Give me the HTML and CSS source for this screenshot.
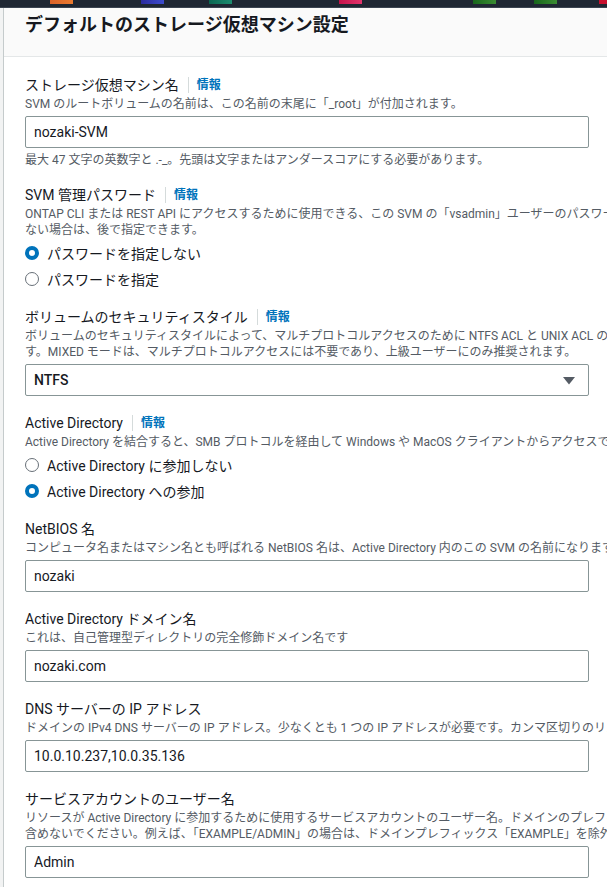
FILE: index.html
```html
<!DOCTYPE html>
<html lang="ja">
<head>
<meta charset="utf-8">
<title>デフォルトのストレージ仮想マシン設定</title>
<link rel="stylesheet" href="styles.css">
</head>
<body>
<div class="topbar">
  <span class="seg seg-orange"></span>
  <span class="seg seg-blue"></span>
  <span class="seg seg-teal"></span>
  <span class="seg seg-pink"></span>
  <span class="seg seg-green1"></span>
  <span class="seg seg-green2"></span>
  <span class="seg seg-red"></span>
</div>
<div class="container">
  <div class="header">
    <h2 class="title">デフォルトのストレージ仮想マシン設定</h2>
  </div>
  <div class="content">
    <div class="field">
      <div class="label"><span>ストレージ仮想マシン名</span><a class="info">情報</a></div>
      <div class="desc">SVM のルートボリュームの名前は、この名前の末尾に「_root」が付加されます。</div>
      <input class="text-input" type="text" value="nozaki-SVM">
      <div class="desc hint">最大 47 文字の英数字と .-_。先頭は文字またはアンダースコアにする必要があります。</div>
    </div>

    <div class="field">
      <div class="label"><span>SVM 管理パスワード</span><a class="info">情報</a></div>
      <div class="desc">ONTAP CLI または REST API にアクセスするために使用できる、この SVM の「vsadmin」ユーザーのパスワード。パスワードを指定し<br>ない場合は、後で指定できます。</div>
      <div class="radio-group">
        <div class="radio-row"><span class="radio checked"></span><span>パスワードを指定しない</span></div>
        <div class="radio-row"><span class="radio"></span><span>パスワードを指定</span></div>
      </div>
    </div>

    <div class="field">
      <div class="label"><span>ボリュームのセキュリティスタイル</span><a class="info">情報</a></div>
      <div class="desc">ボリュームのセキュリティスタイルによって、マルチプロトコルアクセスのために NTFS ACL と UNIX ACL のどちらを使用するかが決まりま<br>す。MIXED モードは、マルチプロトコルアクセスには不要であり、上級ユーザーにのみ推奨されます。</div>
      <div class="select">
        <span class="select-value">NTFS</span>
        <svg class="caret" width="14" height="9" viewBox="0 0 14 9"><polygon points="1,1 13,1 7,8.5" fill="#545b64"/></svg>
      </div>
    </div>

    <div class="field">
      <div class="label"><span>Active Directory</span><a class="info">情報</a></div>
      <div class="desc">Active Directory を結合すると、SMB プロトコルを経由して Windows や MacOS クライアントからアクセスできます。</div>
      <div class="radio-group">
        <div class="radio-row"><span class="radio"></span><span>Active Directory に参加しない</span></div>
        <div class="radio-row"><span class="radio checked"></span><span>Active Directory への参加</span></div>
      </div>
    </div>

    <div class="field">
      <div class="label"><span>NetBIOS 名</span></div>
      <div class="desc">コンピュータ名またはマシン名とも呼ばれる NetBIOS 名は、Active Directory 内のこの SVM の名前になります。</div>
      <input class="text-input" type="text" value="nozaki">
    </div>

    <div class="field">
      <div class="label"><span>Active Directory ドメイン名</span></div>
      <div class="desc">これは、自己管理型ディレクトリの完全修飾ドメイン名です</div>
      <input class="text-input" type="text" value="nozaki.com">
    </div>

    <div class="field">
      <div class="label"><span>DNS サーバーの IP アドレス</span></div>
      <div class="desc">ドメインの IPv4 DNS サーバーの IP アドレス。少なくとも 1 つの IP アドレスが必要です。カンマ区切りのリストを入力してください。</div>
      <input class="text-input" type="text" value="10.0.10.237,10.0.35.136">
    </div>

    <div class="field">
      <div class="label"><span>サービスアカウントのユーザー名</span></div>
      <div class="desc">リソースが Active Directory に参加するために使用するサービスアカウントのユーザー名。ドメインのプレフィックスは<br>含めないでください。例えば、「EXAMPLE/ADMIN」の場合は、ドメインプレフィックス「EXAMPLE」を除外してください。</div>
      <input class="text-input" type="text" value="Admin">
    </div>
  </div>
</div>
</body>
</html>
```

FILE: styles.css
```css
html, body {
  margin: 0;
  padding: 0;
  overflow: hidden;
}
body {
  background: #f2f3f3;
  font-family: Roboto, "Noto Sans CJK JP", sans-serif;
  color: #16191f;
  width: 607px;
  height: 887px;
}
.topbar {
  height: 7px;
  background: #1f2733;
  border-bottom: 1px solid #3a4350;
  display: flex;
  align-items: flex-start;
  overflow: hidden;
}
.seg {
  flex: none;
  width: 23px;
  height: 4px;
}
.seg-orange { margin-left: 50px; background: linear-gradient(90deg, #d9622a, #ea7a30); }
.seg-blue { margin-left: 68px; background: linear-gradient(90deg, #2b2b9e, #3d4ccf); }
.seg-teal { margin-left: 45px; background: linear-gradient(90deg, #0b6652, #1c8c70); }
.seg-pink { margin-left: 107px; background: linear-gradient(90deg, #c4124a, #e2346c); }
.seg-green1 { margin-left: 111px; background: linear-gradient(90deg, #17661c, #3a8c32); }
.seg-green2 { margin-left: 38px; background: linear-gradient(90deg, #17661c, #3a8c32); }
.seg-red { margin-left: 42px; background: #c8102e; }

.container {
  margin-left: 3px;
  width: 1000px;
  border-left: 1px solid #c5cbcc;
  background: #ffffff;
  min-height: 900px;
}
.header {
  background: #fafafa;
  border-bottom: 1px solid #e4e7e8;
  padding: 6px 21px 20px;
}
.title {
  margin: 0;
  font-size: 18px;
  line-height: 22px;
  font-weight: 700;
  color: #16191f;
}
.content {
  padding: 17px 21px 0;
  display: flex;
  flex-direction: column;
  gap: 16px;
}
.field {
  display: flex;
  flex-direction: column;
  align-items: flex-start;
}
.label {
  font-size: 14px;
  line-height: 22px;
  display: flex;
  align-items: center;
  white-space: nowrap;
}
.info {
  margin-left: 9px;
  padding-left: 8px;
  border-left: 1px solid #d5dbdb;
  line-height: 16px;
  font-size: 12px;
  font-weight: 700;
  color: #0073bb;
}
.desc {
  font-size: 12px;
  line-height: 16px;
  color: #545b64;
  white-space: nowrap;
}
.hint {
  margin-top: 4px;
}
.text-input {
  margin: 4px 0 0;
  box-sizing: border-box;
  width: 564px;
  height: 32px;
  padding: 0 8px;
  border: 1px solid #879596;
  border-radius: 2px;
  background: #ffffff;
  font-family: Roboto, "Noto Sans CJK JP", sans-serif;
  font-size: 14px;
  color: #16191f;
  outline: none;
}
.select {
  margin-top: 4px;
  box-sizing: border-box;
  width: 564px;
  height: 32px;
  padding: 0 12px 0 8px;
  border: 1px solid #879596;
  border-radius: 2px;
  display: flex;
  align-items: center;
  justify-content: space-between;
  font-size: 14px;
}
.select-value {
  font-weight: 500;
}
.caret {
  display: block;
}
.radio-group {
  margin-top: 4px;
  display: flex;
  flex-direction: column;
  gap: 4px;
}
.radio-row {
  height: 22px;
  display: flex;
  align-items: center;
  gap: 8px;
  font-size: 14px;
  white-space: nowrap;
}
.radio {
  box-sizing: border-box;
  width: 14px;
  height: 14px;
  border-radius: 50%;
  border: 1.5px solid #687078;
  background: #ffffff;
  flex: none;
}
.radio.checked {
  border: 4px solid #0073bb;
}
```
